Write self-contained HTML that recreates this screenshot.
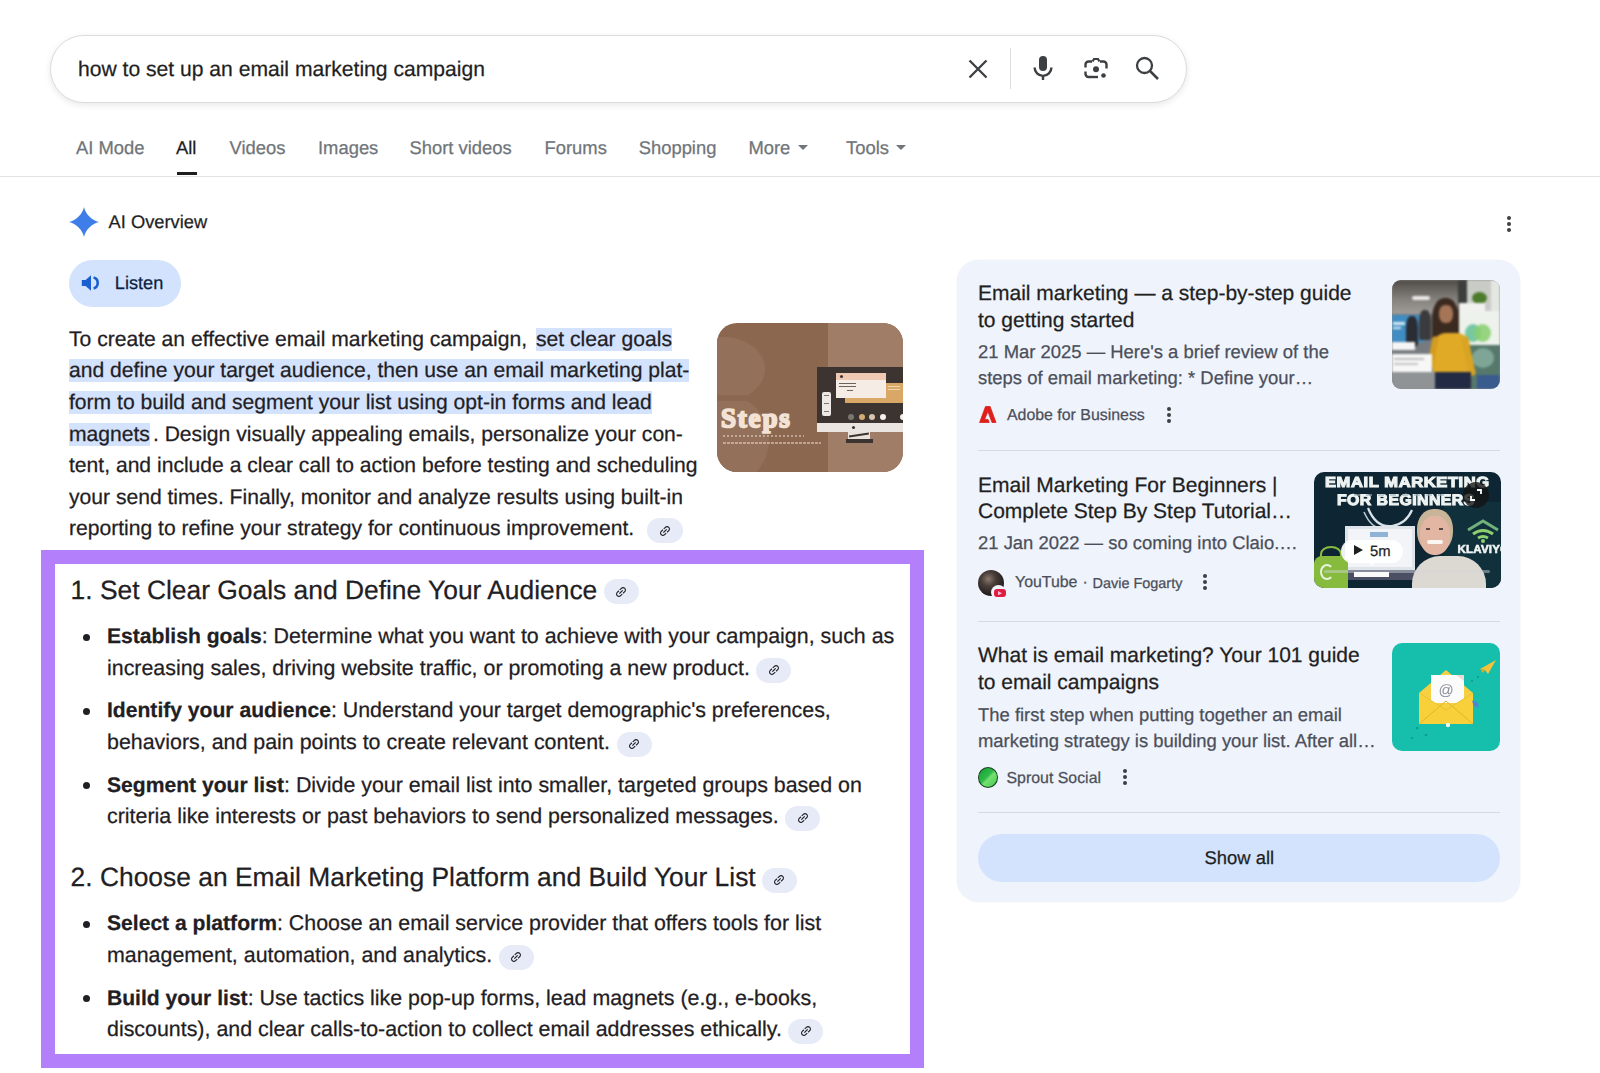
<!DOCTYPE html>
<html><head><meta charset="utf-8"><title>how to set up an email marketing campaign</title>
<style>
html,body{margin:0;padding:0;background:#fff;}
body{width:1600px;height:1073px;position:relative;overflow:hidden;font-family:"Liberation Sans",sans-serif;color:#1f2024;text-rendering:geometricPrecision;}
.t{-webkit-text-stroke:0.25px currentColor;}
.t{position:absolute;white-space:nowrap;}
.a{position:absolute;}
.hl{background:#d3e3fd;}
.chip{display:inline-block;width:35px;height:25px;border-radius:13px;background:#e7ebf8;vertical-align:-7.8px;margin-left:6.5px;position:relative;}
.chip svg{position:absolute;left:10.5px;top:5.5px;}
.dots{position:absolute;width:4px;}
.dots i{display:block;width:4px;height:4px;border-radius:50%;background:#3c4043;margin-bottom:2.2px;}
.bl b{font-size:21.1px;}
.bul{position:absolute;width:7px;height:7px;border-radius:50%;background:#1f2024;}
.divl{position:absolute;height:1px;background:#d5dbe6;}
</style></head><body>
<div class="a" style="left:50px;top:34.5px;width:1135px;height:66px;border:1px solid #dcdcdc;border-radius:34px;box-shadow:0 2px 6px rgba(32,33,36,0.10);background:#fff;"></div>
<div class="t" style="left:78px;top:54.82px;font-size:21.1px;line-height:29.54px;color:#1f1f1f;">how to set up an email marketing campaign</div>
<svg class="a" style="left:966px;top:56.5px" width="24" height="24" viewBox="0 0 24 24"><path d="M3.5 3.5L20.5 20.5M20.5 3.5L3.5 20.5" stroke="#3c4043" stroke-width="2.3" fill="none"/></svg>
<div class="a" style="left:1009.5px;top:48px;width:1.5px;height:41px;background:#dadce0"></div>
<svg class="a" style="left:1031px;top:54px" width="24" height="28" viewBox="0 0 24 28">
<rect x="8" y="2" width="8" height="15" rx="4" fill="#3c4043"/>
<path d="M3.6 13.5a8.4 8.4 0 0 0 16.8 0" stroke="#3c4043" stroke-width="2.4" fill="none"/>
<rect x="10.8" y="21" width="2.4" height="5" fill="#3c4043"/></svg>
<svg class="a" style="left:1082px;top:55px" width="28" height="28" viewBox="0 0 28 28">
<path d="M3.5 12.5V9.5a3 3 0 0 1 3-3h3.5M18 6.5h3.5a3 3 0 0 1 3 3V13.5M3.5 16.5v2.5a3 3 0 0 0 3 3h3.5" stroke="#3c4043" stroke-width="2.4" fill="none"/>
<path d="M10.5 6.5l1.5-2.5h4l1.5 2.5" stroke="#3c4043" stroke-width="2.2" fill="none"/>
<circle cx="14" cy="14.2" r="3" fill="#3c4043"/>
<circle cx="21.5" cy="20.5" r="2.3" fill="#3c4043"/>
<path d="M10 22h6" stroke="#3c4043" stroke-width="2.4"/></svg>
<svg class="a" style="left:1134px;top:55px" width="28" height="28" viewBox="0 0 28 28">
<circle cx="10.5" cy="10.5" r="7.5" stroke="#3c4043" stroke-width="2.3" fill="none"/>
<path d="M16 16L24 24" stroke="#3c4043" stroke-width="2.5"/></svg>
<div class="t" style="left:76px;top:134.84px;font-size:18.4px;line-height:25.76px;color:#70757a;">AI Mode</div>
<div class="t" style="left:176px;top:134.84px;font-size:18.4px;line-height:25.76px;color:#1f1f1f;">All</div>
<div class="t" style="left:229.5px;top:134.84px;font-size:18.4px;line-height:25.76px;color:#70757a;">Videos</div>
<div class="t" style="left:318px;top:134.84px;font-size:18.4px;line-height:25.76px;color:#70757a;">Images</div>
<div class="t" style="left:409.5px;top:134.84px;font-size:18.4px;line-height:25.76px;color:#70757a;">Short videos</div>
<div class="t" style="left:544.5px;top:134.84px;font-size:18.4px;line-height:25.76px;color:#70757a;">Forums</div>
<div class="t" style="left:638.7px;top:134.84px;font-size:18.4px;line-height:25.76px;color:#70757a;">Shopping</div>
<div class="t" style="left:748.4px;top:134.84px;font-size:18.4px;line-height:25.76px;color:#70757a;">More</div>
<div class="t" style="left:846px;top:134.84px;font-size:18.4px;line-height:25.76px;color:#70757a;">Tools</div>
<svg class="a" style="left:798px;top:145px" width="10" height="6" viewBox="0 0 10 6"><path d="M0 0h10L5 5z" fill="#70757a"/></svg>
<svg class="a" style="left:896.2px;top:145px" width="10" height="6" viewBox="0 0 10 6"><path d="M0 0h10L5 5z" fill="#70757a"/></svg>
<div class="a" style="left:177px;top:171.6px;width:20px;height:3.4px;background:#1f1f1f"></div>
<div class="a" style="left:0;top:175.5px;width:1600px;height:1.3px;background:#e3e3e3"></div>
<svg class="a" style="left:69px;top:206.5px" width="30" height="30" viewBox="0 0 30 30"><path d="M15 0C16.2 6.8 23.2 13.8 30 15C23.2 16.2 16.2 23.2 15 30C13.8 23.2 6.8 16.2 0 15C6.8 13.8 13.8 6.8 15 0Z" fill="#3f7ee8"/></svg>
<div class="t" style="left:108.6px;top:209.45px;font-size:18.3px;line-height:25.62px;color:#1f1f1f;">AI Overview</div>
<div class="dots" style="left:1507.3px;top:215.6px"><i></i><i></i><i></i></div>
<div class="a" style="left:69px;top:260px;width:112px;height:47px;border-radius:24px;background:#d3e3fd"></div>
<svg class="a" style="left:81px;top:274px" width="20" height="18" viewBox="0 0 20 18">
<path d="M0.8 6h3.8L10 1.2v15.6L4.6 12H0.8z" fill="#1a5ecf"/>
<path d="M12.6 3.6a5.6 5.6 0 0 1 0 10.8" stroke="#1a5ecf" stroke-width="2.6" fill="none"/></svg>
<div class="t" style="left:114.8px;top:270.55px;font-size:18.2px;line-height:25.48px;color:#0b1f44;">Listen</div>
<div class="t" style="left:69px;top:324.82px;font-size:21.1px;line-height:29.54px;color:#1f2024;">To create an effective email marketing campaign, <span class="hl" style="margin-left:3px">set clear goals</span></div>
<div class="t" style="left:69px;top:356.42px;font-size:21.1px;line-height:29.54px;color:#1f2024;"><span class="hl">and define your target audience, then use an email marketing plat-</span></div>
<div class="t" style="left:69px;top:388.02px;font-size:21.1px;line-height:29.54px;color:#1f2024;"><span class="hl">form to build and segment your list using opt-in forms and lead</span></div>
<div class="t" style="left:69px;top:419.62px;font-size:21.1px;line-height:29.54px;color:#1f2024;"><span class="hl" style="margin-right:3px">magnets</span>. Design visually appealing emails, personalize your con-</div>
<div class="t" style="left:69px;top:451.22px;font-size:21.1px;line-height:29.54px;color:#1f2024;">tent, and include a clear call to action before testing and scheduling</div>
<div class="t" style="left:69px;top:482.82px;font-size:21.1px;line-height:29.54px;color:#1f2024;">your send times. Finally, monitor and analyze results using built-in</div>
<div class="t" style="left:69px;top:514.42px;font-size:21.1px;line-height:29.54px;color:#1f2024;">reporting to refine your strategy for continuous improvement.<span class="chip" style="margin-left:13px;vertical-align:-7.9px;width:36px"><svg width="14" height="14" viewBox="0 0 24 24"><path transform="rotate(-45 12 12)" d="M3.9 12c0-1.71 1.39-3.1 3.1-3.1h4V7H7c-2.76 0-5 2.24-5 5s2.24 5 5 5h4v-1.9H7c-1.71 0-3.1-1.39-3.1-3.1zM8 13h8v-2H8v2zm9-6h-4v1.9h4c1.71 0 3.1 1.39 3.1 3.1s-1.39 3.1-3.1 3.1h-4V17h4c2.76 0 5-2.24 5-5s-2.24-5-5-5z" fill="#1f2024"/></svg></span></div>
<div class="a img" style="left:717px;top:323px;width:186px;height:149px;border-radius:20px;overflow:hidden;background:#8c6750">
<div class="a" style="left:111px;top:0;width:75px;height:149px;background:#a07d66"></div>
<div class="a" style="left:-34px;top:14px;width:82px;height:64px;border-radius:50%;background:#927059;"></div>
<div class="a" style="left:-34px;top:72px;width:86px;height:90px;border-radius:50%;background:#927059;"></div>
<div class="a" style="left:-30px;top:72px;width:90px;height:6px;border-radius:50%;background:#8c6750;"></div>
<div class="a" style="left:99.5px;top:43.5px;width:90px;height:56px;background:#3b3431"></div>
<div class="a" style="left:99.5px;top:99.6px;width:90px;height:9.2px;background:#ebe5e1"></div>
<div class="a" style="left:135px;top:103px;width:3px;height:3px;border-radius:50%;background:#3b3431"></div>
<div class="a" style="left:131px;top:108.8px;width:22px;height:8px;background:#e9e2dc"></div>
<div class="a" style="left:132px;top:111px;width:20px;height:2px;background:#3b3431;transform:rotate(-8deg)"></div>
<div class="a" style="left:129px;top:116px;width:27px;height:4px;background:#3b3431"></div>
<div class="a" style="left:128px;top:59.6px;width:60px;height:20px;background:#d9a866"></div>
<div class="a" style="left:118.7px;top:50px;width:50.7px;height:25px;background:#f5ece6"></div>
<div class="a" style="left:118.7px;top:50px;width:50.7px;height:6.6px;background:#efc9b3"></div>
<div class="a" style="left:123px;top:52px;width:3px;height:3px;border-radius:50%;background:#3b3431"></div>
<div class="a" style="left:121.5px;top:60px;width:17px;height:1.2px;background:#6d625c"></div>
<div class="a" style="left:121.5px;top:63px;width:17px;height:1.2px;background:#6d625c"></div>
<div class="a" style="left:130px;top:67px;width:6px;height:1.2px;background:#6d625c"></div>
<div class="a" style="left:171px;top:63px;width:12px;height:1.2px;background:#f1d7ae"></div>
<div class="a" style="left:171px;top:66px;width:12px;height:1.2px;background:#f1d7ae"></div>
<div class="a" style="left:104.8px;top:68.9px;width:9.2px;height:24.6px;border-radius:2px;background:#efe9e5"></div>
<div class="a" style="left:106.5px;top:72px;width:5px;height:1px;background:#777"></div>
<div class="a" style="left:106.5px;top:80px;width:5px;height:1px;background:#777"></div>
<div class="a" style="left:106.5px;top:88px;width:5px;height:1px;background:#777"></div>
<div class="a" style="left:131px;top:90.7px;width:6px;height:6px;border-radius:50%;background:#7c7670"></div>
<div class="a" style="left:141.5px;top:90.7px;width:6px;height:6px;border-radius:50%;background:#d2ad74"></div>
<div class="a" style="left:152.3px;top:90.7px;width:6px;height:6px;border-radius:50%;background:#d9c4ad"></div>
<div class="a" style="left:162.6px;top:90.7px;width:6px;height:6px;border-radius:50%;background:#f4f0ed"></div>
<div class="a" style="left:183px;top:90.7px;width:6px;height:6px;border-radius:50%;background:#f4f0ed"></div>
<div class="t" style="left:4px;top:79px;font-family:'Liberation Serif',serif;font-weight:bold;font-size:27px;line-height:32px;color:#f2e3d6;-webkit-text-stroke:1.9px #f2e3d6;letter-spacing:1.8px">Steps</div>
<div class="a" style="left:6px;top:112px;width:81px;height:2.2px;background:repeating-linear-gradient(90deg,#e2cdbd 0 2.5px,transparent 2.5px 4px);opacity:.6"></div>
<div class="a" style="left:6px;top:119px;width:98px;height:2.2px;background:repeating-linear-gradient(90deg,#e2cdbd 0 2.5px,transparent 2.5px 4px);opacity:.6"></div>
</div>
<div class="a" style="left:41px;top:549.5px;width:854.5px;height:490px;border:14.5px solid #b47ffb;background:#fff"></div>
<div class="t h" style="left:70.6px;top:571.67px;font-size:26.4px;line-height:36.96px;color:#1f2024;">1. Set Clear Goals and Define Your Audience<span class="chip" style="vertical-align:-5.5px;margin-left:6.3px"><svg width="14" height="14" viewBox="0 0 24 24"><path transform="rotate(-45 12 12)" d="M3.9 12c0-1.71 1.39-3.1 3.1-3.1h4V7H7c-2.76 0-5 2.24-5 5s2.24 5 5 5h4v-1.9H7c-1.71 0-3.1-1.39-3.1-3.1zM8 13h8v-2H8v2zm9-6h-4v1.9h4c1.71 0 3.1 1.39 3.1 3.1s-1.39 3.1-3.1 3.1h-4V17h4c2.76 0 5-2.24 5-5s-2.24-5-5-5z" fill="#1f2024"/></svg></span></div>
<div class="t bl" style="left:107px;top:622.20px;font-size:21.4px;line-height:29.96px;color:#1f2024;"><b>Establish goals</b>: Determine what you want to achieve with your campaign, such as</div>
<div class="t bl" style="left:107px;top:653.80px;font-size:21.4px;line-height:29.96px;color:#1f2024;">increasing sales, driving website traffic, or promoting a new product.<span class="chip"><svg width="14" height="14" viewBox="0 0 24 24"><path transform="rotate(-45 12 12)" d="M3.9 12c0-1.71 1.39-3.1 3.1-3.1h4V7H7c-2.76 0-5 2.24-5 5s2.24 5 5 5h4v-1.9H7c-1.71 0-3.1-1.39-3.1-3.1zM8 13h8v-2H8v2zm9-6h-4v1.9h4c1.71 0 3.1 1.39 3.1 3.1s-1.39 3.1-3.1 3.1h-4V17h4c2.76 0 5-2.24 5-5s-2.24-5-5-5z" fill="#1f2024"/></svg></span></div>
<div class="t bl" style="left:107px;top:696.40px;font-size:21.4px;line-height:29.96px;color:#1f2024;"><b>Identify your audience</b>: Understand your target demographic's preferences,</div>
<div class="t bl" style="left:107px;top:728.00px;font-size:21.4px;line-height:29.96px;color:#1f2024;">behaviors, and pain points to create relevant content.<span class="chip"><svg width="14" height="14" viewBox="0 0 24 24"><path transform="rotate(-45 12 12)" d="M3.9 12c0-1.71 1.39-3.1 3.1-3.1h4V7H7c-2.76 0-5 2.24-5 5s2.24 5 5 5h4v-1.9H7c-1.71 0-3.1-1.39-3.1-3.1zM8 13h8v-2H8v2zm9-6h-4v1.9h4c1.71 0 3.1 1.39 3.1 3.1s-1.39 3.1-3.1 3.1h-4V17h4c2.76 0 5-2.24 5-5s-2.24-5-5-5z" fill="#1f2024"/></svg></span></div>
<div class="t bl" style="left:107px;top:770.60px;font-size:21.4px;line-height:29.96px;color:#1f2024;"><b>Segment your list</b>: Divide your email list into smaller, targeted groups based on</div>
<div class="t bl" style="left:107px;top:802.20px;font-size:21.4px;line-height:29.96px;color:#1f2024;">criteria like interests or past behaviors to send personalized messages.<span class="chip"><svg width="14" height="14" viewBox="0 0 24 24"><path transform="rotate(-45 12 12)" d="M3.9 12c0-1.71 1.39-3.1 3.1-3.1h4V7H7c-2.76 0-5 2.24-5 5s2.24 5 5 5h4v-1.9H7c-1.71 0-3.1-1.39-3.1-3.1zM8 13h8v-2H8v2zm9-6h-4v1.9h4c1.71 0 3.1 1.39 3.1 3.1s-1.39 3.1-3.1 3.1h-4V17h4c2.76 0 5-2.24 5-5s-2.24-5-5-5z" fill="#1f2024"/></svg></span></div>
<div class="bul" style="left:82.5px;top:634.0px"></div>
<div class="bul" style="left:82.5px;top:708.2px"></div>
<div class="bul" style="left:82.5px;top:782.4px"></div>
<div class="t h" style="left:70.6px;top:859.37px;font-size:26.4px;line-height:36.96px;color:#1f2024;">2. Choose an Email Marketing Platform and Build Your List<span class="chip" style="vertical-align:-6.2px;margin-left:6.3px"><svg width="14" height="14" viewBox="0 0 24 24"><path transform="rotate(-45 12 12)" d="M3.9 12c0-1.71 1.39-3.1 3.1-3.1h4V7H7c-2.76 0-5 2.24-5 5s2.24 5 5 5h4v-1.9H7c-1.71 0-3.1-1.39-3.1-3.1zM8 13h8v-2H8v2zm9-6h-4v1.9h4c1.71 0 3.1 1.39 3.1 3.1s-1.39 3.1-3.1 3.1h-4V17h4c2.76 0 5-2.24 5-5s-2.24-5-5-5z" fill="#1f2024"/></svg></span></div>
<div class="t bl" style="left:107px;top:909.20px;font-size:21.4px;line-height:29.96px;color:#1f2024;"><b>Select a platform</b>: Choose an email service provider that offers tools for list</div>
<div class="t bl" style="left:107px;top:941.00px;font-size:21.4px;line-height:29.96px;color:#1f2024;">management, automation, and analytics.<span class="chip"><svg width="14" height="14" viewBox="0 0 24 24"><path transform="rotate(-45 12 12)" d="M3.9 12c0-1.71 1.39-3.1 3.1-3.1h4V7H7c-2.76 0-5 2.24-5 5s2.24 5 5 5h4v-1.9H7c-1.71 0-3.1-1.39-3.1-3.1zM8 13h8v-2H8v2zm9-6h-4v1.9h4c1.71 0 3.1 1.39 3.1 3.1s-1.39 3.1-3.1 3.1h-4V17h4c2.76 0 5-2.24 5-5s-2.24-5-5-5z" fill="#1f2024"/></svg></span></div>
<div class="t bl" style="left:107px;top:983.60px;font-size:21.4px;line-height:29.96px;color:#1f2024;"><b>Build your list</b>: Use tactics like pop-up forms, lead magnets (e.g., e-books,</div>
<div class="t bl" style="left:107px;top:1014.80px;font-size:21.4px;line-height:29.96px;color:#1f2024;">discounts), and clear calls-to-action to collect email addresses ethically.<span class="chip"><svg width="14" height="14" viewBox="0 0 24 24"><path transform="rotate(-45 12 12)" d="M3.9 12c0-1.71 1.39-3.1 3.1-3.1h4V7H7c-2.76 0-5 2.24-5 5s2.24 5 5 5h4v-1.9H7c-1.71 0-3.1-1.39-3.1-3.1zM8 13h8v-2H8v2zm9-6h-4v1.9h4c1.71 0 3.1 1.39 3.1 3.1s-1.39 3.1-3.1 3.1h-4V17h4c2.76 0 5-2.24 5-5s-2.24-5-5-5z" fill="#1f2024"/></svg></span></div>
<div class="bul" style="left:82.5px;top:921.0px"></div>
<div class="bul" style="left:82.5px;top:995.4px"></div>
<div class="a" style="left:957px;top:260px;width:563px;height:642px;border-radius:22px;background:#eff3fc;box-shadow:0 0 1.5px rgba(60,64,90,.12)"></div>
<div class="t" style="left:978px;top:279.12px;font-size:21.0px;line-height:29.4px;color:#1f1f1f;">Email marketing — a step-by-step guide</div>
<div class="t" style="left:978px;top:305.62px;font-size:21.0px;line-height:29.4px;color:#1f1f1f;">to getting started</div>
<div class="t" style="left:978px;top:338.79px;font-size:18.45px;line-height:25.83px;color:#4b4f5a;">21 Mar 2025 — Here's a brief review of the</div>
<div class="t" style="left:978px;top:365.09px;font-size:18.45px;line-height:25.83px;color:#4b4f5a;">steps of email marketing: * Define your…</div>
<svg class="a" style="left:979px;top:406px" width="18" height="17" viewBox="0 0 18 17"><path d="M6.5 0.5h4.6L17 16.5h-4L8.9 5.6 5.6 13.4h3.4l1.3 3.1H0.6z" fill="#de1f1b" stroke="#de1f1b" stroke-width="0.8" stroke-linejoin="round"/></svg>
<div class="t" style="left:1007px;top:404.76px;font-size:15.9px;line-height:22.26px;color:#4b4f5a;">Adobe for Business</div>
<div class="dots" style="left:1166.8px;top:407px"><i></i><i></i><i></i></div>
<div class="a" style="left:1392px;top:280px;width:108px;height:109px;border-radius:9px;overflow:hidden;background:#8d8b88">
<div style="position:absolute;left:0;top:0;width:108px;height:109px;filter:blur(0.8px)">
<div class="a" style="left:0;top:0;width:70px;height:36px;background:linear-gradient(#4f4b47,#86827e 55%,#a4a19d)"></div>
<div class="a" style="left:19.5px;top:15.5px;width:18px;height:4.5px;border-radius:2px;background:#ececea"></div>
<div class="a" style="left:0;top:34px;width:66px;height:60px;background:#777b80"></div>
<div class="a" style="left:0;top:34.8px;width:33px;height:27px;background:#3f8dc2"></div>
<div class="a" style="left:1px;top:42px;width:12px;height:2.5px;background:#d8ecf7"></div>
<div class="a" style="left:1px;top:47px;width:8px;height:2px;background:#d8ecf7"></div>
<div class="a" style="left:14px;top:36px;width:12px;height:30px;border-radius:40% 40% 10% 10%;background:#2a2d33"></div>
<div class="a" style="left:27px;top:30px;width:12px;height:30px;border-radius:40% 40% 10% 10%;background:#3b3a3c"></div>
<div class="a" style="left:65.6px;top:0;width:9.4px;height:36px;background:#3c3e3d"></div>
<div class="a" style="left:75px;top:0;width:33px;height:32px;background:#c9ccc6"></div>
<div class="a" style="left:99px;top:0;width:9px;height:32px;background:#e4e7e1"></div>
<div class="a" style="left:80px;top:11.8px;width:14.7px;height:12.2px;border-radius:50%;background:#4d7b2c"></div>
<div class="a" style="left:66.8px;top:22.7px;width:26.7px;height:8.5px;background:#f1f1ef"></div>
<div class="a" style="left:66.8px;top:31.2px;width:41.2px;height:33.8px;background:#eef2ec"></div>
<div class="a" style="left:73px;top:44px;width:16px;height:18px;border-radius:50%;background:#69c39a;opacity:.9"></div>
<div class="a" style="left:82px;top:44px;width:17px;height:18px;border-radius:50%;background:#87cf6d;opacity:.85"></div>
<div class="a" style="left:66px;top:65px;width:42px;height:44px;background:#55786b"></div>
<div class="a" style="left:80px;top:68px;width:22px;height:20px;border-radius:50%;background:#7ea596"></div>
<div class="a" style="left:85px;top:95px;width:23px;height:14px;background:#3a5b8e"></div>
<div class="a" style="left:0;top:92px;width:66px;height:17px;background:#8f9396"></div>
<div class="a" style="left:40px;top:18px;width:27px;height:45px;border-radius:45% 45% 15% 15%;background:#3b2a20"></div>
<div class="a" style="left:47.4px;top:25.2px;width:13.3px;height:18px;border-radius:45%;background:#a67558"></div>
<div class="a" style="left:41px;top:53px;width:37px;height:40px;border-radius:35% 35% 8% 8%;background:#e0aa27"></div>
<div class="a" style="left:38px;top:56px;width:6px;height:32px;border-radius:3px;background:#d39c20;transform:rotate(10deg)"></div>
<div class="a" style="left:73px;top:56px;width:7px;height:40px;border-radius:3px;background:#d9a423;transform:rotate(-12deg)"></div>
<div class="a" style="left:43px;top:92px;width:36px;height:17px;background:#232b44"></div>
<div class="a" style="left:0;top:61.5px;width:23px;height:8.5px;background:#f5f5f5"></div>
<div class="a" style="left:0;top:73.6px;width:40px;height:18.2px;background:#f7f7f7"></div>
<div class="a" style="left:2px;top:78px;width:30px;height:2px;background:#bdbdbd"></div>
<div class="a" style="left:2px;top:83px;width:24px;height:2px;background:#c4c4c4"></div>
</div>
</div>
<div class="divl" style="left:978px;top:450px;width:522px"></div>
<div class="t" style="left:978px;top:470.62px;font-size:21.0px;line-height:29.4px;color:#1f1f1f;">Email Marketing For Beginners |</div>
<div class="t" style="left:978px;top:496.92px;font-size:21.0px;line-height:29.4px;color:#1f1f1f;">Complete Step By Step Tutorial…</div>
<div class="t" style="left:978px;top:530.09px;font-size:18.45px;line-height:25.83px;color:#4b4f5a;">21 Jan 2022 — so coming into Claio.…</div>
<div class="a" style="left:978px;top:570px;width:26px;height:26px;border-radius:50%;background:radial-gradient(circle at 40% 35%,#8a7a70 0,#4a3f3a 30%,#1c1816 75%)"></div>
<div class="a" style="left:991px;top:584.5px;width:15px;height:15px;border-radius:50%;background:#f0f3fb"></div>
<div class="a" style="left:993.9px;top:588.7px;width:11.8px;height:7.9px;border-radius:3px;background:#e11d3f"></div>
<svg class="a" style="left:998px;top:590.6px" width="4" height="4.4" viewBox="0 0 4 4.4"><path d="M0 0L4 2.2L0 4.4z" fill="#fbd"/></svg>
<div class="t" style="left:1015px;top:572.16px;font-size:15.9px;line-height:22.26px;color:#4b4f5a;">YouTube</div>
<div class="t" style="left:1082.5px;top:572.16px;font-size:15.9px;line-height:22.26px;color:#4b4f5a;">·</div>
<div class="t" style="left:1092.5px;top:573.68px;font-size:14.45px;line-height:20.23px;color:#4b4f5a;">Davie Fogarty</div>
<div class="dots" style="left:1203px;top:574px"><i></i><i></i><i></i></div>
<div class="a" style="left:1314px;top:472px;width:186.5px;height:115.5px;border-radius:10px;overflow:hidden;background:#0e2633">
<div style="position:absolute;left:0;top:0;width:186.5px;height:115.5px;filter:blur(0.5px)">
<div class="a" style="left:130px;top:30px;width:60px;height:90px;background:#10303c"></div>
<svg class="a" style="left:48px;top:34px" width="56" height="24" viewBox="0 0 56 24"><path d="M6 2Q14 22 30 20Q44 18 50 4" stroke="#d8e4ea" stroke-width="2.2" fill="none"/><path d="M2 6Q10 24 22 22" stroke="#b8cad2" stroke-width="1.6" fill="none"/></svg>
<div class="a" style="left:31px;top:54px;width:70px;height:44px;background:#dfe3ea"></div>
<div class="a" style="left:34px;top:57px;width:64px;height:38px;background:#f2f4f7"></div>
<div class="a" style="left:56px;top:60px;width:18px;height:5px;background:#8fb3d6"></div>
<div class="a" style="left:28px;top:98px;width:90px;height:10px;background:#4a4f63"></div>
<div class="a" style="left:0;top:84px;width:34px;height:32px;border-radius:8px 8px 0 0;background:#86bb3e"></div>
<div class="a" style="left:6px;top:74px;width:18px;height:14px;border-radius:50% 50% 0 0;border:2.5px solid #86bb3e;border-bottom:none"></div>
<div class="a" style="left:6px;top:92px;width:10px;height:12px;border-radius:50%;border:2px solid #e8f2dd;border-right-color:transparent"></div>
<div class="a" style="left:98px;top:84px;width:74px;height:36px;border-radius:28px 28px 0 0;background:#dcd8d2"></div>
<div class="a" style="left:103px;top:37px;width:36px;height:44px;border-radius:45% 45% 48% 48%;background:#c8b497"></div>
<div class="a" style="left:106px;top:44px;width:30px;height:39px;border-radius:45%;background:#e2b6a2"></div>
<div class="a" style="left:113px;top:68px;width:16px;height:4px;border-radius:2px;background:#faf6f2"></div>
<div class="a" style="left:112px;top:56px;width:4px;height:2px;background:#5a4a44"></div>
<div class="a" style="left:125px;top:56px;width:4px;height:2px;background:#5a4a44"></div>
<svg class="a" style="left:152px;top:46px" width="34" height="26" viewBox="0 0 34 26"><path d="M2 12L17 3L32 12" stroke="#6fb37a" stroke-width="3" fill="none"/><path d="M7 16Q17 9 27 16" stroke="#8fd06e" stroke-width="3" fill="none"/><path d="M12 20Q17 17 22 20" stroke="#8fd06e" stroke-width="3" fill="none"/><circle cx="17" cy="23" r="2" fill="#8fd06e"/></svg>
<div class="t" style="left:143.5px;top:73px;font-weight:bold;font-size:11.5px;line-height:11px;color:#f0f4f2;-webkit-text-stroke:0.6px #f0f4f2;letter-spacing:0.2px">KLAVIYO</div>
<div class="t" style="left:11px;top:2.5px;font-weight:bold;font-size:14.6px;line-height:16px;color:#eef3f1;-webkit-text-stroke:1.1px #eef3f1;letter-spacing:0.55px;transform:scaleX(1.13);transform-origin:0 0">EMAIL MARKETING</div>
<div class="t" style="left:23px;top:21px;font-weight:bold;font-size:15.2px;line-height:16px;color:#eef3f1;-webkit-text-stroke:1.1px #eef3f1;letter-spacing:0.45px;transform:scaleX(1.04);transform-origin:0 0">FOR BEGINNERS</div>
<div class="a" style="left:40px;top:22px;width:90px;height:1.5px;background:repeating-linear-gradient(90deg,#9fb0b8 0 6px,transparent 6px 12px);opacity:.6"></div>
<div class="a" style="left:149px;top:10px;width:26px;height:26px;border-radius:50%;background:rgba(20,20,20,.8)"></div>
<svg class="a" style="left:155px;top:16px" width="14" height="14" viewBox="0 0 14 14"><path d="M8 2h4v4M6 12H2V8" stroke="#fff" stroke-width="1.8" fill="none"/></svg>
<div class="a" style="left:10px;top:98px;width:166px;height:3px;border-radius:2px;background:rgba(210,215,220,.45)"></div>
<div class="a" style="left:40px;top:100px;width:35px;height:5px;background:#fafafa"></div>
</div>
<div class="a" style="left:27px;top:67.5px;width:61.5px;height:23px;border-radius:12px;background:rgba(255,255,255,.93)"></div>
<div class="a" style="left:54px;top:89px;width:0;height:0;border-left:4px solid transparent;border-right:4px solid transparent;border-top:5px solid rgba(255,255,255,.9)"></div>
<svg class="a" style="left:40px;top:73px" width="9" height="10" viewBox="0 0 9 10"><path d="M0 0L9 5L0 10z" fill="#1f1f1f"/></svg>
<div class="t" style="left:56px;top:68.5px;font-size:14.8px;line-height:22px;color:#1f1f1f">5m</div>
</div>
<div class="divl" style="left:978px;top:620.5px;width:522px"></div>
<div class="t" style="left:978px;top:641.32px;font-size:21.0px;line-height:29.4px;color:#1f1f1f;">What is email marketing? Your 101 guide</div>
<div class="t" style="left:978px;top:668.32px;font-size:21.0px;line-height:29.4px;color:#1f1f1f;">to email campaigns</div>
<div class="t" style="left:978px;top:702.09px;font-size:18.45px;line-height:25.83px;color:#4b4f5a;">The first step when putting together an email</div>
<div class="t" style="left:978px;top:727.89px;font-size:18.45px;line-height:25.83px;color:#4b4f5a;">marketing strategy is building your list. After all…</div>
<div class="a" style="left:977.6px;top:766.8px;width:20.4px;height:20.8px;box-sizing:border-box;border-radius:50%;border:1.6px solid #173f22;background:linear-gradient(135deg,#1a9f35 0,#2dbb48 45%,#74e070 55%,#5bd45e 80%,#245c2f 100%)"></div>
<div class="t" style="left:1006.5px;top:767.76px;font-size:15.9px;line-height:22.26px;color:#4b4f5a;">Sprout Social</div>
<div class="dots" style="left:1122.6px;top:769px"><i></i><i></i><i></i></div>
<div class="a" style="left:1392px;top:643px;width:108px;height:108px;border-radius:10px;overflow:hidden;background:#15bfab">
<svg class="a" style="left:0;top:0;filter:blur(0.4px)" width="108" height="108" viewBox="0 0 108 108">
<path d="M27 50L54 27L81 50V81H27z" fill="#f6d043"/>
<rect x="39" y="32" width="33" height="28" fill="#fbfbfb"/>
<path d="M64 32L72 38V32z" fill="#f0d9d5"/>
<path d="M27 50L54 67L81 50V81H27z" fill="#f7d03a"/>
<path d="M27 81L54 58L81 81" stroke="#e3b52a" stroke-width="1" fill="none"/>
<path d="M27 50L54 67L81 50" stroke="#e9c237" stroke-width="1" fill="none"/>
<text x="54" y="52" font-family="Liberation Sans" font-size="15" fill="#8b8f9a" text-anchor="middle">@</text>
<path d="M88 26L104 17L96 31L93 27z" fill="#f6c23a"/>
<path d="M88 26L93 27L91 30z" fill="#e0a92c"/>
<path d="M80 58a5 5 0 0 1 6 7l-4-2z" fill="#4d86d6"/>
<circle cx="56" cy="82" r="2.2" fill="#e9f6ef"/>
<g fill="#0f9a8a"><circle cx="25" cy="85" r="1.3"/><circle cx="34" cy="92" r="1.3"/><circle cx="20" cy="95" r="1.1"/><circle cx="80" cy="38" r="1.1"/><circle cx="86" cy="34" r="1.1"/></g>
</svg>
</div>
<div class="divl" style="left:978px;top:811.5px;width:522px"></div>
<div class="a" style="left:977.5px;top:834.3px;width:522.5px;height:47.3px;border-radius:24px;background:#d3e3fd"></div>
<div class="t" style="left:1204.6px;top:845.34px;font-size:18.4px;line-height:25.76px;color:#1f1f1f;">Show all</div>
</body></html>
